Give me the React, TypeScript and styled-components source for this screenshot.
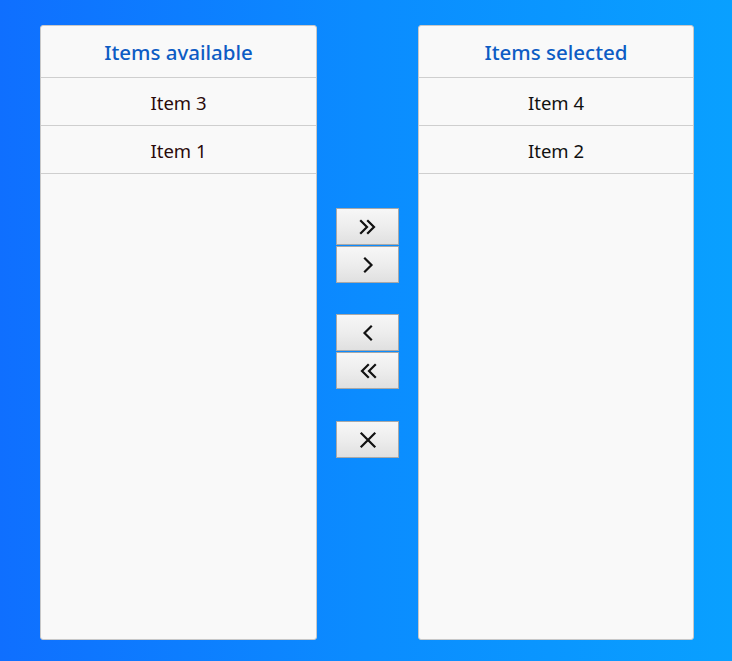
import React from "react";
import styled, { createGlobalStyle } from "styled-components";

const Global = createGlobalStyle`
  html, body { margin: 0; padding: 0; }
  body { font-family: "Noto Sans", "Open Sans", sans-serif; }
`;

const Page = styled.div`
  width: 732px;
  height: 661px;
  box-sizing: border-box;
  padding: 25px 38px 21px 40px;
  background: linear-gradient(90deg, #0f6fff 0%, #0b8cff 50%, #09a0ff 100%);
  display: flex;
  align-items: stretch;
`;

const Panel = styled.div<{ $w: number }>`
  width: ${(p) => p.$w}px;
  box-sizing: border-box;
  background: #f9f9f9;
  border: 1px solid #c8c8c8;
  border-radius: 3px;
  display: flex;
  flex-direction: column;
`;

const Title = styled.div`
  height: 52px;
  box-sizing: border-box;
  padding-top: 1px;
  border-bottom: 1px solid #cfcfcf;
  display: flex;
  align-items: center;
  justify-content: center;
  color: #0d5cc4;
  font-size: 20.5px;
  font-weight: 500;
`;

const Row = styled.div<{ $c: string }>`
  height: 48px;
  box-sizing: border-box;
  padding-top: 2px;
  border-bottom: 1px solid #cfcfcf;
  display: flex;
  align-items: center;
  justify-content: center;
  color: ${(p) => p.$c};
  font-size: 18.5px;
`;

const Controls = styled.div`
  width: 63px;
  margin: 183px 19px 0 19px;
  display: flex;
  flex-direction: column;
`;

const Group = styled.div<{ $mt: number }>`
  display: flex;
  flex-direction: column;
  gap: 1px;
  margin-top: ${(p) => p.$mt}px;
`;

const Btn = styled.button`
  width: 63px;
  height: 37px;
  padding: 0;
  box-sizing: border-box;
  border: 1px solid #a8a8a8;
  background: linear-gradient(180deg, #f7f7f7 0%, #ececec 55%, #e0e0e0 100%);
  display: flex;
  align-items: center;
  justify-content: center;
  cursor: pointer;
`;

const Icon = ({ d }: { d: string }) => (
  <svg width="24" height="24" viewBox="0 0 24 24" fill="none" stroke="#111" strokeWidth="2.2" strokeLinecap="square">
    <path d={d} />
  </svg>
);

const ICONS = {
  allRight: "M5 6 L11 12 L5 18 M12 6 L18 12 L12 18",
  right: "M9 5.5 L15.5 12 L9 18.5",
  left: "M15 5.5 L8.5 12 L15 18.5",
  allLeft: "M12 6 L6 12 L12 18 M19 6 L13 12 L19 18",
  clear: "M5.5 5.5 L18.5 18.5 M18.5 5.5 L5.5 18.5",
};

export default function App() {
  return (
    <>
      <Global />
      <Page>
        <Panel $w={277}>
          <Title>Items available</Title>
          <Row $c="#2a0a0a">Item 3</Row>
          <Row $c="#2a0a0a">Item 1</Row>
        </Panel>
        <Controls>
          <Group $mt={0}>
            <Btn aria-label="move all right"><Icon d={ICONS.allRight} /></Btn>
            <Btn aria-label="move right"><Icon d={ICONS.right} /></Btn>
          </Group>
          <Group $mt={31}>
            <Btn aria-label="move left"><Icon d={ICONS.left} /></Btn>
            <Btn aria-label="move all left"><Icon d={ICONS.allLeft} /></Btn>
          </Group>
          <Group $mt={32}>
            <Btn aria-label="clear"><Icon d={ICONS.clear} /></Btn>
          </Group>
        </Controls>
        <Panel $w={276}>
          <Title>Items selected</Title>
          <Row $c="#111">Item 4</Row>
          <Row $c="#111">Item 2</Row>
        </Panel>
      </Page>
    </>
  );
}
